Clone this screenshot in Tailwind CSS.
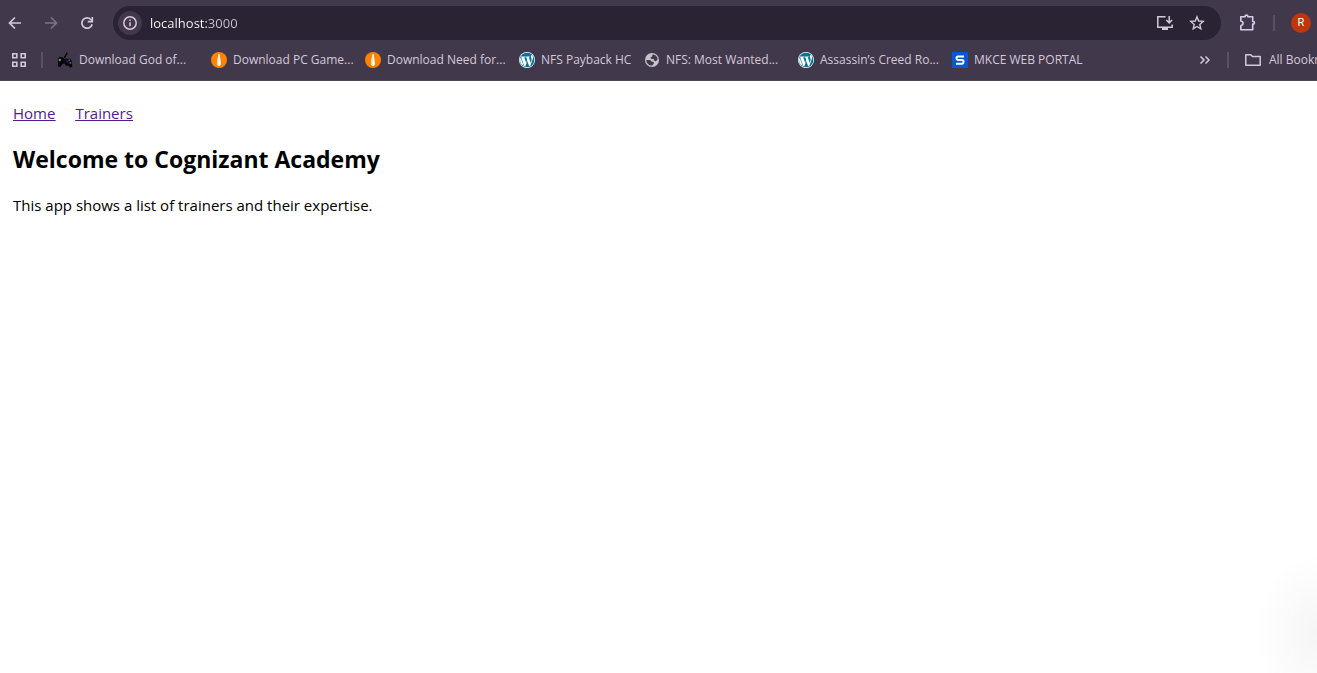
<!DOCTYPE html>
<html lang="en">
<head>
<meta charset="utf-8">
<title>Cognizant Academy</title>
<script src="https://cdn.jsdelivr.net/npm/@tailwindcss/browser@4"></script>
</head>
<body class="flex min-h-screen flex-col overflow-x-hidden bg-white font-['Open_Sans',sans-serif] text-black">
<svg class="hidden" aria-hidden="true">
  <symbol id="wp" viewBox="0 0 24 24">
    <circle cx="12" cy="12" r="12" fill="#fff"/>
    <circle cx="12" cy="12" r="11" fill="#00749a"/>
    <path d="M12 2a10 10 0 0 0-8.400 4.600h5.800v1.200l-1.400.2 2.800 8.400 1.500-4.600-1.300-3.600-1-.2V6.600h6.300v1.200l-1.500.2 2.800 8.300 1.200-4c.9-2.700-.9-3.900-.9-5.700 0-1.200.8-2.100 1.800-2.200A10 10 0 0 0 12 2z" fill="#00749a"/>
    <path d="M3.400 6.600h6v1.200l-1.500.2 2.900 8.500 1.500-4.600-1.400-3.900-1-.2V6.600h6.300v1.200l-1.500.2 2.900 8.400 1.200-4c.8-2.700-1-3.900-1-5.700 0-1.300 1-2.200 2-2.200 1.500 1.200 1.500 4.500.6 7.200L17 20.700l-1.800.8-2.800-8-2.900 8.400-1.600-.5L3.200 8z" fill="#fff"/>
    <path d="M2.400 8.300 7.100 21A10 10 0 0 1 2.400 8.300z" fill="#fff"/>
  </symbol>
  <symbol id="flame" viewBox="0 0 16 16">
    <circle cx="8" cy="8" r="8" fill="#ff8200"/>
    <path d="M7.300 2.300h1.400l1.300 9.400-1.100 2.300H7.100L6 11.700z" fill="#fff"/>
    <path d="M7.300 2.300h.5L7.500 14h-.4L6 11.700z" fill="#ffdca8"/>
  </symbol>
</svg>
<header class="border-b border-[#4f4956] bg-[#42384b] text-[#d3c9da]">
  <div class="flex items-center pt-1.5 pr-1.5">
    <div class="flex items-center gap-4 pr-4 pl-[5px]">
      <button aria-label="Back" class="flex h-5 w-5 items-center justify-center"><svg class="h-4 w-4" viewBox="0 0 16 16" fill="none" stroke="currentColor" stroke-width="1.700"><path d="M14 8H3M8 2.500 2.500 8 8 13.500"/></svg></button>
      <button aria-label="Forward" class="flex h-5 w-5 items-center justify-center text-[#7d7387]"><svg class="h-4 w-4" viewBox="0 0 16 16" fill="none" stroke="currentColor" stroke-width="1.700"><path d="M2 8h11M8 2.500 13.500 8 8 13.500"/></svg></button>
      <button aria-label="Reload" class="flex h-5 w-5 items-center justify-center"><svg class="h-4 w-4" viewBox="0 0 16 16" fill="none" stroke="currentColor" stroke-width="1.700"><path d="M13.100 9.200A5.200 5.200 0 1 1 11.900 4.500L13 5.600"/><path d="M13.300 2v4.600H8.700"/></svg></button>
    </div>
    <div class="flex h-[34px] min-w-0 flex-1 items-center rounded-full bg-[#2a2334] pr-4 pl-[5px]">
      <button aria-label="Site information" class="flex h-6 w-6 items-center justify-center rounded-full bg-[#42384b]"><svg class="h-4 w-4" viewBox="0 0 16 16" fill="none" stroke="currentColor" stroke-width="1.500"><circle cx="8" cy="8" r="6.200"/><path d="M8 7.300v4M8 4.500v1.500"/></svg></button>
      <input type="text" aria-label="Address" value="localhost:3000" class="ml-2 min-w-0 flex-1 bg-linear-to-r from-white from-[56px] to-[#cbc3d2] to-[57px] bg-clip-text text-[13px] leading-5 text-transparent outline-none">
      <div class="flex items-center gap-4">
        <button aria-label="Install app"><svg class="h-4 w-4" viewBox="0 0 16 16" fill="none" stroke="currentColor" stroke-width="1.500"><path d="M8.500 1.800H.8v10.400h14.400V9.500M12.200 1v6.500M9.300 5l2.900 2.900L15.100 5"/><path d="M5 14h6" stroke-width="2"/></svg></button>
        <button aria-label="Bookmark this page"><svg class="h-4 w-4" viewBox="0 0 16 16" fill="none" stroke="currentColor" stroke-width="1.400"><path d="M8 1.800 9.700 6l4.500.4-3.400 3 1 4.400L8 11.500l-3.800 2.300 1-4.400-3.400-3L6.300 6z"/></svg></button>
      </div>
    </div>
    <button aria-label="Extensions" class="ml-4 text-[#dccbe8]"><svg class="h-5 w-5" viewBox="0 0 20 20" fill="none" stroke="currentColor" stroke-width="1.600" stroke-linejoin="round"><path d="M3.800 3.800h4.400V3c0-1.300 2.600-1.300 2.600 0v.8h4.900v4.700h.8c1.300 0 1.300 2.600 0 2.600h-.8v5.600H3.800v-4c3-.5 3-4.200 0-4.700z"/></svg></button>
    <span class="ml-4 h-4 w-0.5 bg-[#5b5067]"></span>
    <button aria-label="Profile" class="ml-4 flex h-5 w-5 items-center justify-center rounded-full bg-[#bf360c] font-[Roboto,sans-serif] text-[11px] text-white">R</button>
  </div>
  <nav aria-label="Bookmarks" class="flex h-10 items-center overflow-hidden text-xs whitespace-nowrap">
    <button aria-label="Apps" class="ml-[11px]"><svg class="h-4 w-4" viewBox="0 0 16 16" fill="none" stroke="currentColor" stroke-width="1.600"><path d="M1.800 1.800h4v4h-4zM10.200 1.800h4v4h-4zM1.800 10.200h4v4h-4zM10.200 10.200h4v4h-4z"/></svg></button>
    <span class="ml-3.5 h-4 w-0.5 bg-[#5b5067]"></span>
    <div class="ml-3.5 flex min-w-0 flex-1">
      <a href="#" class="flex w-[154px] shrink-0 items-center gap-1.5"><svg class="h-4 w-4" viewBox="0 0 16 16"><path d="M8 6C6.500 3 11 3.500 9.500.5" fill="none" stroke="#000" stroke-width="1.500"/><path d="M.8 6.500 3 4.800 6 5.500 8 7.500l1.500-1 4 .5 1.500 3 .3 5-2.300.7-1.500-2.200-2.500.5-1.500-2.500-2 .5L3.500 15 1 14.500z" fill="#080808"/><circle cx="2.800" cy="8" r="1.200" fill="#888"/><path d="M9.500 8.500h2v2h-2z" fill="#1020b0"/><path d="M11.500 7.500H13V9h-1.500z" fill="#168c32"/><path d="M12.500 10h1.700v1.700h-1.700z" fill="#e51d35"/></svg>Download God of...</a>
      <a href="#" class="flex w-[154px] shrink-0 items-center gap-1.5"><svg class="h-4 w-4"><use href="#flame"/></svg>Download PC Game...</a>
      <a href="#" class="flex w-[154px] shrink-0 items-center gap-1.5"><svg class="h-4 w-4"><use href="#flame"/></svg>Download Need for...</a>
      <a href="#" class="flex w-[125px] shrink-0 items-center gap-1.5"><svg class="h-4 w-4"><use href="#wp"/></svg>NFS Payback HC</a>
      <a href="#" class="flex w-[154px] shrink-0 items-center gap-1.5"><svg class="h-4 w-4" viewBox="0 0 16 16"><circle cx="8" cy="8" r="7" fill="#c4c4c8"/><path d="M8.500 2.500c3 0 5 2.300 5.200 4.700L12 9.200 9.800 8.500V7H7.500L6.300 5.800l1.800-1.300zM2.300 8h4l1.600 1.700 1.900.3v1.500l-1.600 2.100C5 13.600 2.300 11.500 2.300 8z" fill="#42384b"/></svg>NFS: Most Wanted...</a>
      <a href="#" class="flex w-[154px] shrink-0 items-center gap-1.5"><svg class="h-4 w-4"><use href="#wp"/></svg>Assassin’s Creed Ro...</a>
      <a href="#" class="flex shrink-0 items-center gap-1.5"><svg class="h-4 w-4" viewBox="0 0 16 16"><path d="M0 0h16v16H0z" fill="#0759d2"/><path d="M12 4.500H6Q4.500 4.500 4.500 6.200T6 8h4q1.500 0 1.500 1.800T10 11.800H4" fill="none" stroke="#fff" stroke-width="2"/></svg>MKCE WEB PORTAL</a>
    </div>
    <button aria-label="More bookmarks"><svg class="h-4 w-4" viewBox="0 0 16 16" fill="none" stroke="currentColor" stroke-width="1.500"><path d="m3.500 4.500 3.500 3.500-3.500 3.500M8.500 4.500 12 8l-3.500 3.500"/></svg></button>
    <span class="ml-3.5 h-4 w-0.5 bg-[#5b5067]"></span>
    <button class="ml-4 flex items-center gap-2"><svg class="h-4 w-4" viewBox="0 0 16 16" fill="none" stroke="currentColor" stroke-width="1.500" stroke-linejoin="round"><path d="M.8 2.800h5l1.700 1.700h7.700v8.700H.8z"/></svg><span class="w-12 overflow-hidden text-left">All Bookmarks</span></button>
  </nav>
</header>
<main class="relative flex-1 overflow-hidden px-[13px] pt-5">
  <nav aria-label="Main" class="flex gap-5 text-[15px] leading-6 text-[#551a8b] underline">
    <a href="#">Home</a>
    <a href="#">Trainers</a>
  </nav>
  <h2 class="mt-[18px] text-[23px] leading-8 font-bold">Welcome to Cognizant Academy</h2>
  <p class="mt-[18px] text-[15px] leading-6">This app shows a list of trainers and their expertise.</p>
  <div class="pointer-events-none absolute -right-16 -bottom-10 h-40 w-32 bg-radial from-black/4 to-transparent to-70%"></div>
</main>
</body>
</html>
